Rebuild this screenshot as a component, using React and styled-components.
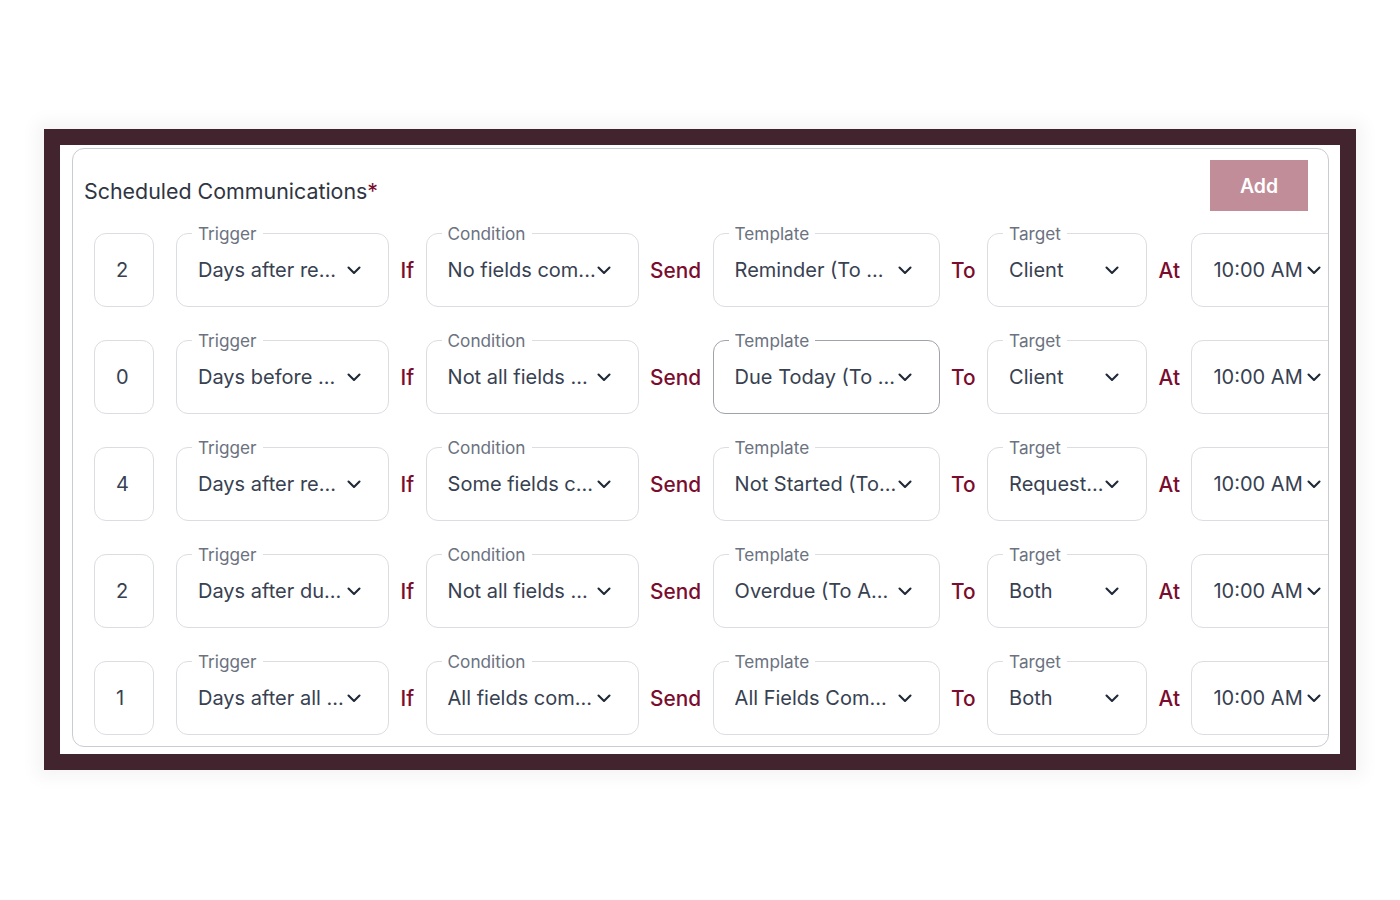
import React from "react";
import styled, { createGlobalStyle } from "styled-components";

const GlobalStyle = createGlobalStyle`
  * { box-sizing: border-box; }
  body {
    margin: 0;
    background: #ffffff;
    font-family: Inter, "Noto Sans", sans-serif;
  }
`;

const Page = styled.div`
  width: 1400px;
  height: 900px;
  padding: 129px 0 0 44px;
`;

const Frame = styled.div`
  width: 1312px;
  height: 641px;
  background: #42242f;
  padding: 16px;
  box-shadow: 0 0 16px 8px rgba(0, 0, 0, 0.045);
`;

const Inner = styled.div`
  background: #ffffff;
  height: 100%;
  padding: 3px 11px 7px 12px;
`;

const Card = styled.div`
  border: 1px solid #c9ccd3;
  border-radius: 12px;
  padding: 11px 20px 11px 11px;
  overflow: hidden;
`;

const Header = styled.div`
  display: flex;
  align-items: center;
  justify-content: space-between;
  height: 51px;
`;

const Title = styled.h2`
  margin: 10px 0 0;
  font-size: 21.4px;
  font-weight: 400;
  color: #2f3542;
  span {
    color: #7a0c2e;
  }
`;

const AddButton = styled.button`
  width: 98px;
  height: 51px;
  border: none;
  background: #c08d99;
  color: #ffffff;
  font-family: Inter, sans-serif;
  font-size: 19.5px;
  font-weight: 600;
  cursor: pointer;
`;

const Rows = styled.div`
  display: flex;
  flex-direction: column;
  gap: 33px;
  margin-top: 22px;
  padding-left: 10px;
`;

const Row = styled.div`
  display: flex;
  align-items: center;
  gap: 11.5px;
  & > * {
    flex-shrink: 0;
  }
`;

const NumberBox = styled.div`
  width: 60px;
  height: 74px;
  border: 1px solid #dcdde1;
  border-radius: 12px;
  display: flex;
  align-items: center;
  padding-left: 21px;
  margin-right: 10.5px;
  font-size: 20px;
  color: #374151;
`;

const Select = styled.div`
  position: relative;
  width: ${p => p.$w}px;
  height: 74px;
  border: 1px solid ${p => (p.$active ? "#9fa3ab" : "#dcdde1")};
  border-radius: 12px;
  display: flex;
  align-items: center;
  padding: 0 27px 0 21px;
  font-size: 20px;
  color: #374151;
  white-space: nowrap;
`;

const Label = styled.span`
  position: absolute;
  top: -10px;
  left: 15px;
  padding: 0 6px;
  background: #ffffff;
  font-size: 17.2px;
  line-height: 20px;
  color: #6b7280;
`;

const Chevron = styled.svg`
  margin-left: auto;
  flex-shrink: 0;
`;

const Word = styled.span`
  font-size: 20.8px;
  font-weight: 500;
  color: #7a0c2e;
`;

const Arrow = () => (
  <Chevron width="14" height="9" viewBox="0 0 14 9">
    <path
      d="M1.5 1.5 7 7l5.5-5.5"
      fill="none"
      stroke="#1f2937"
      strokeWidth="2.1"
      strokeLinecap="round"
      strokeLinejoin="round"
    />
  </Chevron>
);

const Field = ({ label, value, w, active }) => (
  <Select $w={w} $active={active}>
    {label && <Label>{label}</Label>}
    <span>{value}</span>
    <Arrow />
  </Select>
);

const rows = [
  { n: "2", trigger: "Days after re...", condition: "No fields com...", template: "Reminder (To ...", target: "Client" },
  { n: "0", trigger: "Days before ...", condition: "Not all fields ...", template: "Due Today (To ...", target: "Client", active: true },
  { n: "4", trigger: "Days after re...", condition: "Some fields c...", template: "Not Started (To...", target: "Request..." },
  { n: "2", trigger: "Days after du...", condition: "Not all fields ...", template: "Overdue (To A...", target: "Both" },
  { n: "1", trigger: "Days after all ...", condition: "All fields com...", template: "All Fields Com...", target: "Both" },
];

const App = () => {
  return (
    <Page>
      <GlobalStyle />
      <Frame>
        <Inner>
          <Card>
            <Header>
              <Title>
                Scheduled Communications<span>*</span>
              </Title>
              <AddButton>Add</AddButton>
            </Header>
            <Rows>
              {rows.map((r, i) => (
                <Row key={i}>
                  <NumberBox>{r.n}</NumberBox>
                  <Field label="Trigger" value={r.trigger} w={213} />
                  <Word>If</Word>
                  <Field label="Condition" value={r.condition} w={213} />
                  <Word>Send</Word>
                  <Field label="Template" value={r.template} w={227} active={r.active} />
                  <Word>To</Word>
                  <Field label="Target" value={r.target} w={160} />
                  <Word>At</Word>
                  <Field value="10:00 AM" w={158} />
                </Row>
              ))}
            </Rows>
          </Card>
        </Inner>
      </Frame>
    </Page>
  );
};

export default App;
